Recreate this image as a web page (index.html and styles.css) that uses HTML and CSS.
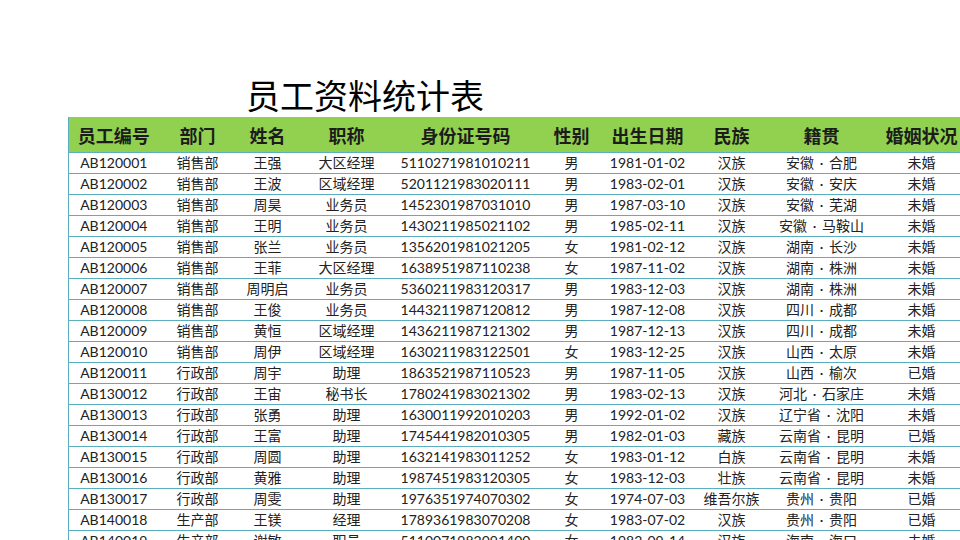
FILE: index.html
```html
<!DOCTYPE html>
<html lang="zh-CN">
<head>
<meta charset="utf-8">
<title>员工资料统计表</title>
<link rel="stylesheet" href="styles.css">
</head>
<body>
<div class="page">
  <h1 class="title">员工资料统计表</h1>
  <table class="sheet">
    <colgroup>
      <col class="c1"><col class="c2"><col class="c3"><col class="c4"><col class="c5">
      <col class="c6"><col class="c7"><col class="c8"><col class="c9"><col class="c10">
    </colgroup>
    <thead>
      <tr><th>员工编号</th><th>部门</th><th>姓名</th><th>职称</th><th>身份证号码</th><th>性别</th><th>出生日期</th><th>民族</th><th>籍贯</th><th>婚姻状况</th></tr>
    </thead>
    <tbody>
      <tr><td>AB120001</td><td>销售部</td><td>王强</td><td>大区经理</td><td>5110271981010211</td><td>男</td><td>1981-01-02</td><td>汉族</td><td>安徽 · 合肥</td><td>未婚</td></tr>
      <tr><td>AB120002</td><td>销售部</td><td>王波</td><td>区域经理</td><td>5201121983020111</td><td>男</td><td>1983-02-01</td><td>汉族</td><td>安徽 · 安庆</td><td>未婚</td></tr>
      <tr><td>AB120003</td><td>销售部</td><td>周昊</td><td>业务员</td><td>1452301987031010</td><td>男</td><td>1987-03-10</td><td>汉族</td><td>安徽 · 芜湖</td><td>未婚</td></tr>
      <tr><td>AB120004</td><td>销售部</td><td>王明</td><td>业务员</td><td>1430211985021102</td><td>男</td><td>1985-02-11</td><td>汉族</td><td>安徽 · 马鞍山</td><td>未婚</td></tr>
      <tr><td>AB120005</td><td>销售部</td><td>张兰</td><td>业务员</td><td>1356201981021205</td><td>女</td><td>1981-02-12</td><td>汉族</td><td>湖南 · 长沙</td><td>未婚</td></tr>
      <tr><td>AB120006</td><td>销售部</td><td>王菲</td><td>大区经理</td><td>1638951987110238</td><td>女</td><td>1987-11-02</td><td>汉族</td><td>湖南 · 株洲</td><td>未婚</td></tr>
      <tr><td>AB120007</td><td>销售部</td><td>周明启</td><td>业务员</td><td>5360211983120317</td><td>男</td><td>1983-12-03</td><td>汉族</td><td>湖南 · 株洲</td><td>未婚</td></tr>
      <tr><td>AB120008</td><td>销售部</td><td>王俊</td><td>业务员</td><td>1443211987120812</td><td>男</td><td>1987-12-08</td><td>汉族</td><td>四川 · 成都</td><td>未婚</td></tr>
      <tr><td>AB120009</td><td>销售部</td><td>黄恒</td><td>区域经理</td><td>1436211987121302</td><td>男</td><td>1987-12-13</td><td>汉族</td><td>四川 · 成都</td><td>未婚</td></tr>
      <tr><td>AB120010</td><td>销售部</td><td>周伊</td><td>区域经理</td><td>1630211983122501</td><td>女</td><td>1983-12-25</td><td>汉族</td><td>山西 · 太原</td><td>未婚</td></tr>
      <tr><td>AB120011</td><td>行政部</td><td>周宇</td><td>助理</td><td>1863521987110523</td><td>男</td><td>1987-11-05</td><td>汉族</td><td>山西 · 榆次</td><td>已婚</td></tr>
      <tr><td>AB130012</td><td>行政部</td><td>王宙</td><td>秘书长</td><td>1780241983021302</td><td>男</td><td>1983-02-13</td><td>汉族</td><td>河北 · 石家庄</td><td>未婚</td></tr>
      <tr><td>AB130013</td><td>行政部</td><td>张勇</td><td>助理</td><td>1630011992010203</td><td>男</td><td>1992-01-02</td><td>汉族</td><td>辽宁省 · 沈阳</td><td>未婚</td></tr>
      <tr><td>AB130014</td><td>行政部</td><td>王富</td><td>助理</td><td>1745441982010305</td><td>男</td><td>1982-01-03</td><td>藏族</td><td>云南省 · 昆明</td><td>已婚</td></tr>
      <tr><td>AB130015</td><td>行政部</td><td>周圆</td><td>助理</td><td>1632141983011252</td><td>女</td><td>1983-01-12</td><td>白族</td><td>云南省 · 昆明</td><td>未婚</td></tr>
      <tr><td>AB130016</td><td>行政部</td><td>黄雅</td><td>助理</td><td>1987451983120305</td><td>女</td><td>1983-12-03</td><td>壮族</td><td>云南省 · 昆明</td><td>未婚</td></tr>
      <tr><td>AB130017</td><td>行政部</td><td>周雯</td><td>助理</td><td>1976351974070302</td><td>女</td><td>1974-07-03</td><td>维吾尔族</td><td>贵州 · 贵阳</td><td>已婚</td></tr>
      <tr><td>AB140018</td><td>生产部</td><td>王镁</td><td>经理</td><td>1789361983070208</td><td>女</td><td>1983-07-02</td><td>汉族</td><td>贵州 · 贵阳</td><td>已婚</td></tr>
      <tr><td>AB140019</td><td>生产部</td><td>谢敏</td><td>职员</td><td>5110071982091400</td><td>女</td><td>1982-09-14</td><td>汉族</td><td>海南 · 海口</td><td>未婚</td></tr>
    </tbody>
  </table>
</div>
</body>
</html>
```

FILE: styles.css
```css
html, body {
  margin: 0;
  padding: 0;
  background: #ffffff;
  overflow: hidden;
  width: 960px;
  height: 540px;
}

.page {
  width: 960px;
  height: 540px;
  overflow: hidden;
  font-family: "Lato", "Noto Sans CJK SC", sans-serif;
  color: #222222;
}

.title {
  margin: 0;
  padding: 73px 0 0 246px;
  height: 44px;
  box-sizing: content-box;
  font-family: "Noto Sans CJK SC", sans-serif;
  font-weight: 400;
  font-size: 34px;
  line-height: 44px;
  color: #000000;
  white-space: nowrap;
}

.sheet {
  margin-left: 68px;
  border-collapse: collapse;
  table-layout: fixed;
  width: 906px;
  border-left: 1px solid #5aaec0;
}

.c1 { width: 90px; }
.c2 { width: 78px; }
.c3 { width: 62px; }
.c4 { width: 96px; }
.c5 { width: 142px; }
.c6 { width: 70px; }
.c7 { width: 82px; }
.c8 { width: 86px; }
.c9 { width: 94px; }
.c10 { width: 106px; }

.sheet th {
  background: #92d050;
  height: 35px;
  padding: 0;
  font-family: "Noto Sans CJK SC", sans-serif;
  font-size: 18px;
  font-weight: 700;
  color: #1c1c1c;
  text-align: center;
  white-space: nowrap;
  border-bottom: 1px solid #5aaec0;
}

.sheet td {
  height: 20px;
  padding: 0;
  font-size: 14px;
  line-height: 20px;
  text-align: center;
  white-space: pre;
  word-spacing: 2px;
  border-bottom: 1px solid #5aaec0;
  color: #222222;
}
```
